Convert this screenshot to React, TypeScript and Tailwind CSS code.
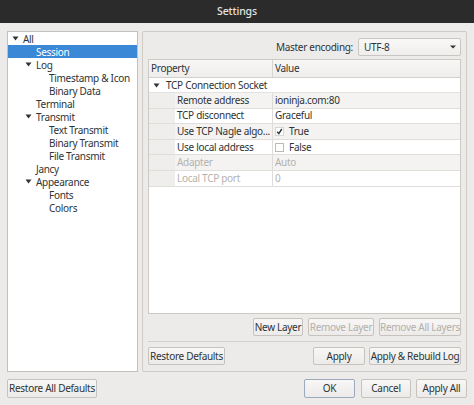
import React from "react";

const Arrow = () => (
  <svg width="7" height="5" viewBox="0 0 7 5" className="shrink-0">
    <path d="M0.5 0.5 L6.5 0.5 L3.5 4.5 Z" fill="#2e3436" />
  </svg>
);

type TreeItem = { label: string; level: number; arrow?: boolean; selected?: boolean };

const tree: TreeItem[] = [
  { label: "All", level: 0, arrow: true },
  { label: "Session", level: 1, selected: true },
  { label: "Log", level: 1, arrow: true },
  { label: "Timestamp & Icon", level: 2 },
  { label: "Binary Data", level: 2 },
  { label: "Terminal", level: 1 },
  { label: "Transmit", level: 1, arrow: true },
  { label: "Text Transmit", level: 2 },
  { label: "Binary Transmit", level: 2 },
  { label: "File Transmit", level: 2 },
  { label: "Jancy", level: 1 },
  { label: "Appearance", level: 1, arrow: true },
  { label: "Fonts", level: 2 },
  { label: "Colors", level: 2 },
];

const Btn = ({ children, disabled, focus, className = "" }: { children: React.ReactNode; disabled?: boolean; focus?: boolean; className?: string }) => (
  <div
    className={
      "flex items-center justify-center rounded-[2px] border bg-gradient-to-b from-[#f8f7f6] to-[#edebe9] " +
      (focus ? "border-[#9aa9bb] " : "border-[#c6c2bd] ") +
      (disabled ? "text-[#b3b0ab] " : "text-[#2e3436] ") +
      className
    }
  >
    {children}
  </div>
);

type Row = { prop: string; value: React.ReactNode; dim?: boolean };

const rows: Row[] = [
  { prop: "Remote address", value: "ioninja.com:80" },
  { prop: "TCP disconnect", value: "Graceful" },
  {
    prop: "Use TCP Nagle algo...",
    value: (
      <span className="flex items-center gap-[5px]">
        <span className="flex h-[9px] w-[9px] items-center justify-center border border-[#d8d6d2] bg-white">
          <svg width="7" height="7" viewBox="0 0 7 7">
            <path d="M1.2 3.8 L2.8 5.6 L5.8 1" stroke="#2e3436" strokeWidth="1.4" fill="none" />
          </svg>
        </span>
        True
      </span>
    ),
  },
  {
    prop: "Use local address",
    value: (
      <span className="flex items-center gap-[5px]">
        <span className="h-[9px] w-[9px] border border-[#bdbab5] bg-white" />
        False
      </span>
    ),
  },
  { prop: "Adapter", value: "Auto", dim: true },
  { prop: "Local TCP port", value: "0", dim: true },
];

export default function App() {
  return (
    <div
      className="flex h-[405px] w-[474px] flex-col overflow-hidden bg-[#edebe9] text-[10px] tracking-[-0.3px] text-[#2e3436]"
      style={{ fontFamily: '"Noto Sans", "DejaVu Sans", sans-serif' }}
    >
      {/* title bar */}
      <div className="flex h-[23px] shrink-0 items-center justify-center bg-[#2b2b2b] text-[10.5px] font-medium tracking-[-0.1px] text-[#e4e4e3]">
        Settings
      </div>

      <div className="flex flex-1 flex-col px-[7px] pt-[8px]">
        <div className="flex h-[341px] gap-[4px]">
          {/* tree */}
          <div className="w-[131px] border border-[#c3bfba] bg-white">
            {tree.map((t) => (
              <div
                key={t.label}
                className={
                  "flex h-[13px] items-center leading-none " +
                  (t.selected ? "bg-[#3b88d6] text-white" : "")
                }
              >
                <div
                  className={
                    t.level === 0 ? "w-[15px] pl-[4px]" : t.level === 1 ? "w-[28px] pl-[17px]" : "w-[41px]"
                  }
                >
                  {t.arrow && <Arrow />}
                </div>
                <span>{t.label}</span>
              </div>
            ))}
          </div>

          {/* group box */}
          <div className="flex flex-1 flex-col rounded-[2px] border border-[#cfcbc6] px-[5px] pt-[6px] pb-[6px]">
            <div className="flex h-[18px] items-center justify-end gap-[5px]">
              <span>Master encoding:</span>
              <div className="flex h-[18px] w-[103px] items-center justify-between rounded-[2px] border border-[#c9c5c0] bg-gradient-to-b from-[#f9f8f7] to-[#efeeec] pl-[5px] pr-[4px]">
                <span>UTF-8</span>
                <svg width="6" height="4" viewBox="0 0 6 4">
                  <path d="M0 0.5 L6 0.5 L3 3.5 Z" fill="#2e3436" />
                </svg>
              </div>
            </div>

            {/* table */}
            <div className="mt-[3px] flex h-[257px] flex-col border border-[#cdc9c4] bg-white">
              <div className="flex h-[18px] shrink-0 border-b border-[#d3d0cb] bg-gradient-to-b from-[#f8f7f6] to-[#efedeb]">
                <div className="flex w-[124px] items-center border-r border-[#d8d5d1] pl-[2px]">Property</div>
                <div className="flex items-center pl-[2px]">Value</div>
              </div>
              <div className="flex h-[15px] items-center border-b border-[#e4e2df]">
                <div className="w-[17px] pl-[4px]">
                  <Arrow />
                </div>
                <span>TCP Connection Socket</span>
              </div>
              {rows.map((r, i) => (
                <div
                  key={r.prop}
                  className={
                    "flex h-[15.6px] border-b border-[#e0deda] " + (r.dim ? "text-[#b5b2ad] " : "")
                  }
                >
                  <div className="w-[26px] shrink-0 bg-[#efeeec]" />
                  <div
                    className={
                      "flex w-[98px] shrink-0 items-center whitespace-nowrap border-r border-[#dedcd8] pl-[2px] " +
                      (i % 2 === 0 ? "bg-[#f4f3f2]" : "bg-white")
                    }
                  >
                    {r.prop}
                  </div>
                  <div
                    className={
                      "flex flex-1 items-center pl-[2px] " + (i % 2 === 0 ? "bg-[#f4f3f2]" : "bg-white")
                    }
                  >
                    {r.value}
                  </div>
                </div>
              ))}
            </div>

            <div className="mt-[4px] flex h-[18px] justify-end gap-[5px]">
              <Btn className="w-[50px]">New Layer</Btn>
              <Btn disabled className="w-[66px]">Remove Layer</Btn>
              <Btn disabled className="w-[82px]">Remove All Layers</Btn>
            </div>

            <div className="mt-[5px] border-t border-[#d3d0cb]" />

            <div className="mt-[5px] flex h-[18px] items-stretch">
              <Btn className="w-[77px]">Restore Defaults</Btn>
              <div className="flex-1" />
              <Btn className="w-[52px]">Apply</Btn>
              <Btn className="ml-[4px] w-[92px]">Apply &amp; Rebuild Log</Btn>
            </div>
          </div>
        </div>

        {/* bottom buttons */}
        <div className="mt-[7px] flex h-[19px] items-stretch">
          <Btn className="w-[90px]">Restore All Defaults</Btn>
          <div className="flex-1" />
          <Btn focus className="w-[51px]">OK</Btn>
          <Btn className="ml-[6px] w-[50px]">Cancel</Btn>
          <Btn className="ml-[5px] w-[51px]">Apply All</Btn>
        </div>
      </div>
    </div>
  );
}
